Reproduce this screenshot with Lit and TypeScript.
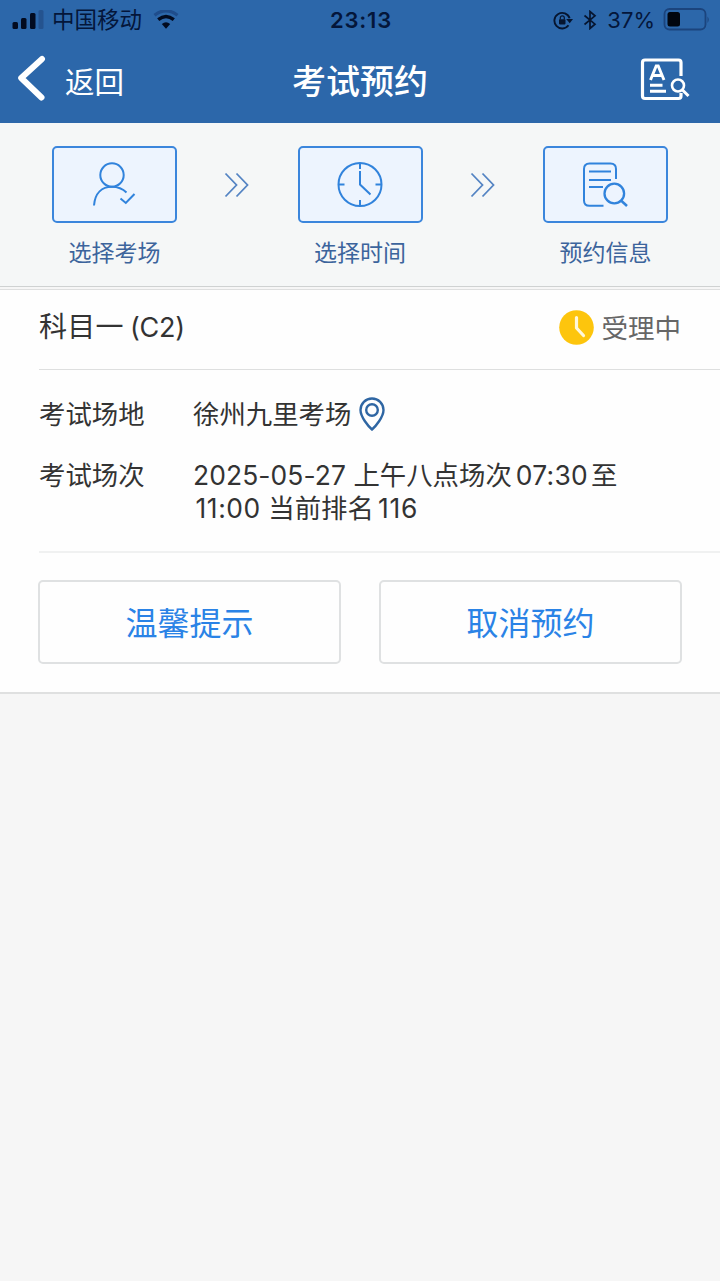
import { LitElement, html, css, svg } from "lit";
import { customElement, property } from "lit/decorators.js";

@customElement("status-bar")
class StatusBar extends LitElement {
  static styles = css`
    :host { display: block; color: #04163a; }
    .bar { display: grid; grid-template-columns: 1fr auto 1fr; align-items: center; height: 40px; padding: 0 10px 0 12px; }
    .side { display: flex; align-items: center; }
    .right { justify-content: flex-end; }
    .carrier { font-size: 22.5px; line-height: 40px; margin-left: 8px; }
    .time { font-size: 22px; line-height: 40px; font-weight: 600; letter-spacing: 0.75px; }
    .pct { font-size: 22px; line-height: 40px; margin: 0 8px 0 10px; }
    .wifi { margin-left: 11px; }
    .bt { margin-left: 10px; }
    svg { display: block; }
  `;
  render() {
    return html`<div class="bar">
      <div class="side">
        <svg width="32" height="20" viewBox="0 0 32 20">
          <rect x="0.5" y="12" width="5.5" height="7" rx="1.5" fill="#020b20" />
          <rect x="9" y="8" width="5.5" height="11" rx="1.5" fill="#020b20" />
          <rect x="18" y="3" width="5.5" height="16" rx="1.5" fill="#020b20" />
          <rect x="26.5" y="0" width="5" height="19" rx="1.5" fill="#24538f" />
        </svg>
        <span class="carrier">中国移动</span>
        <svg class="wifi" width="26" height="20" viewBox="0 0 26 20">
          <path d="M1.5 5.2 Q13 -3.6 24.500 5.200" fill="none" stroke="#1f4d8c" stroke-width="3.2" />
          <path d="M5.200 9.600 Q13 3.400 20.800 9.600" fill="none" stroke="#020b20" stroke-width="3.400" />
          <path d="M13 18.800 L8.800 13.900 Q13 10.500 17.200 13.900 Z" fill="#020b20" />
        </svg>
      </div>
      <span class="time">23:13</span>
      <div class="side right">
        <svg width="20" height="20" viewBox="0 0 20 20">
          <path d="M15.500 15.300 A7.800 7.800 0 1 1 16.600 8.200" fill="none" stroke="#06152f" stroke-width="1.900" />
          <path d="M13.200 9 H20 L16.700 13.300 Z" fill="#06152f" />
          <rect x="6" y="9.200" width="6.500" height="5.200" rx="0.800" fill="#06152f" />
          <path d="M7.300 9.500 V7.800 A2 2 0 0 1 11.300 7.800 V9.500" fill="none" stroke="#06152f" stroke-width="1.200" />
        </svg>
        <svg class="bt" width="14" height="20" viewBox="0 0 14 20">
          <path d="M1.500 5.500 L12 14.200 L7 18.500 V1.500 L12 5.800 L1.500 14.500" fill="none" stroke="#06152f" stroke-width="1.700" />
        </svg>
        <span class="pct">37%</span>
        <svg width="47" height="24" viewBox="0 0 47 24">
          <rect x="1.500" y="1" width="41" height="20.500" rx="5" fill="none" stroke="#1b447d" stroke-width="1.800" />
          <rect x="4.500" y="4" width="12.500" height="14.500" rx="2.500" fill="#01060f" />
          <path d="M44.500 8.500 Q47 11.700 44.500 15 Z" fill="#1b447d" />
        </svg>
      </div>
    </div>`;
  }
}

@customElement("nav-bar")
class NavBar extends LitElement {
  static styles = css`
    :host { display: block; color: #fff; }
    .nav { display: grid; grid-template-columns: 1fr auto 1fr; align-items: center; height: 83px; box-sizing: border-box; padding: 0 17px 5px; }
    .back { display: flex; align-items: center; }
    .label { font-size: 29.5px; line-height: 44px; margin: 6px 0 0 18px; }
    .title { font-size: 34px; line-height: 48px; font-weight: 500; margin-top: 5px; }
    .tool { justify-self: end; margin-right: 13px; }
    svg { display: block; }
  `;
  render() {
    return html`<div class="nav">
      <div class="back">
        <svg width="30" height="48" viewBox="0 0 30 48">
          <path d="M25 4 L4.200 23 L24.500 42.500" fill="none" stroke="#fff" stroke-width="6" stroke-linecap="round" stroke-linejoin="round" />
        </svg>
        <span class="label">返回</span>
      </div>
      <span class="title">考试预约</span>
      <svg class="tool" width="50" height="44" viewBox="0 0 50 44" fill="none" stroke="#fff" stroke-width="3.200">
        <path d="M41 19 V5.500 Q41 3 38.500 3 H5 Q2.500 3 2.500 5.500 V39 Q2.500 41.500 5 41.500 H38.500 Q41 41.500 41 39 V36" />
        <path d="M10.500 23 L16.200 9 H18.200 L24 23 M12.800 18.500 H21.800" stroke-width="2.900" />
        <path d="M10 28.300 H22.500 M10 34.300 H26" stroke-width="3" />
        <circle cx="38" cy="28.500" r="6" stroke-width="2.600" />
        <path d="M42 32.500 L48.500 39" stroke-width="3" />
      </svg>
    </div>`;
  }
}

const stepIcons: Record<string, unknown> = {
  person: svg`<g transform="translate(-1.500 0)"><circle cx="22.500" cy="14" r="11.700" />
    <path d="M4.500 44.500 C5.500 32 12.500 25.700 22.500 25.700 C28.500 25.700 33.500 28 37 31.500" />
    <path d="M31 37.500 L36.300 42 L45 33" /></g>`,
  clock: svg`<circle cx="23" cy="23.500" r="21.500" />
    <path d="M23 2 V8 M23 39 V45 M1.500 23.500 H7.500 M38.500 23.500 H44.500 M23 10 V23.500 L33.500 33.500" />`,
  record: svg`<path d="M34 18 V8 Q34 2.500 28.500 2.500 H7.500 Q2 2.500 2 8 V39.500 Q2 44.800 7.500 44.800 H21.500" />
    <path d="M7 10.500 H29 M7 19 H29 M7 26 H21" />
    <circle cx="32.300" cy="32.500" r="9.800" stroke-width="2.300" />
    <path d="M39 39.500 L45 45" stroke-width="2.500" />`,
};

@customElement("step-item")
class StepItem extends LitElement {
  @property() icon = "";
  @property() label = "";
  static styles = css`
    :host { display: flex; flex-direction: column; align-items: center; width: 125px; }
    .box { box-sizing: border-box; width: 125px; height: 77px; border: 2px solid #3b86dc; border-radius: 5px; background: #edf4fe; display: flex; align-items: center; justify-content: center; }
    .label { font-size: 23px; line-height: 34px; margin-top: 13px; color: #3c649c; white-space: nowrap; }
    svg { display: block; }
  `;
  render() {
    return html`<div class="box">
        <svg width="47" height="48" viewBox="0 0 47 48" fill="none" stroke="#3183dc" stroke-width="2">${stepIcons[this.icon]}</svg>
      </div>
      <span class="label">${this.label}</span>`;
  }
}

@customElement("app-root")
class AppRoot extends LitElement {
  static styles = css`
    :host { display: block; min-height: 1281px; background: #f6f6f6; font-family: Inter, "Noto Sans CJK SC", sans-serif; color: #333; }
    .head { background: #2c67aa; height: 123px; }
    .steps { box-sizing: border-box; height: 164px; padding: 23px 52px 0; display: flex; justify-content: space-between; border-bottom: 1px solid #cfd2d2; background: #f5f7f7; }
    .arrow { display: block; margin-top: 26px; }
    .card { box-sizing: border-box; margin-top: 2px; height: 405px; background: #fefefe; border-top: 1px solid #dedfdf; border-bottom: 2px solid #dfe0e0; }
    .subject { box-sizing: border-box; height: 80px; margin-left: 39px; padding: 0 39px 4px 0; border-bottom: 1px solid #dedfdf; display: flex; align-items: center; justify-content: space-between; }
    .name { font-size: 28px; letter-spacing: 0.3px; line-height: 40px; }
    .code { margin-left: 6px; letter-spacing: -0.2px; font-size: 27px; }
    .state { display: flex; align-items: center; gap: 8px; font-size: 26.500px; line-height: 40px; color: #666; }
    .state svg { display: block; }
    .details { box-sizing: border-box; height: 183px; margin-left: 39px; padding-top: 28px; border-bottom: 2px solid #f0f1f1; display: grid; grid-template-columns: 154px 1fr; grid-template-rows: 33px auto; row-gap: 28px; font-size: 26.400px; line-height: 33px; }
    .place { display: flex; align-items: center; gap: 8px; }
    .line { display: block; white-space: nowrap; }
    .actions { display: grid; grid-template-columns: 1fr 1fr; gap: 38px; padding: 27px 38px 0; }
    .btn { box-sizing: border-box; height: 84px; border: 2px solid #dfe1e2; border-radius: 5px; background: #fefefe; color: #2a83e6; font-family: inherit; font-size: 32px; line-height: 46px; padding: 3px 0 0; text-align: center; }
    .date { letter-spacing: 0.1px; }
    .clock { margin: 0 3px 0 4px; letter-spacing: 0.3px; }
    .end { margin-left: 2.500px; letter-spacing: 0.6px; }
    .rank { margin-left: 4px; letter-spacing: 0.800px; }
  `;
  arrow() {
    return html`<svg class="arrow" width="26" height="26" viewBox="0 0 26 26" fill="none" stroke="#5484c3" stroke-width="1.800">
      <path d="M1.500 1.500 L12.500 13 L1.500 24.500 M12.500 1.500 L23.500 13 L12.500 24.500" />
    </svg>`;
  }
  render() {
    return html`
      <header class="head"><status-bar></status-bar><nav-bar></nav-bar></header>
      <section class="steps">
        <step-item icon="person" label="选择考场"></step-item>
        ${this.arrow()}
        <step-item icon="clock" label="选择时间"></step-item>
        ${this.arrow()}
        <step-item icon="record" label="预约信息"></step-item>
      </section>
      <section class="card">
        <div class="subject">
          <span class="name">科目一<span class="code">(C2)</span></span>
          <span class="state">
            <svg width="35" height="35" viewBox="0 0 35 35">
              <circle cx="17.500" cy="17.500" r="17.300" fill="#fdc50d" />
              <path d="M17.500 7.500 V18 L24.500 25.500" fill="none" stroke="#fff8dc" stroke-width="3.200" stroke-linecap="round" stroke-linejoin="round" />
            </svg>受理中
          </span>
        </div>
        <div class="details">
          <span>考试场地</span>
          <span class="place">徐州九里考场
            <svg width="26" height="35" viewBox="0 0 26 35" fill="none" stroke="#2f66a3" stroke-width="2.400">
              <path d="M13 32.500 C9.500 29.500 1.500 20 1.500 13 A11.500 11.500 0 0 1 24.500 13 C24.500 20 16.500 29.500 13 32.500 Z" />
              <circle cx="13" cy="13" r="5.800" />
            </svg>
          </span>
          <span>考试场次</span>
          <span>
            <span class="line"><span class="date">2025-05-27</span> 上午八点场次<span class="clock">07:30</span>至</span>
            <span class="line"><span class="end">11:00</span> 当前排名<span class="rank">116</span></span>
          </span>
        </div>
        <div class="actions">
          <button class="btn">温馨提示</button>
          <button class="btn">取消预约</button>
        </div>
      </section>
    `;
  }
}
